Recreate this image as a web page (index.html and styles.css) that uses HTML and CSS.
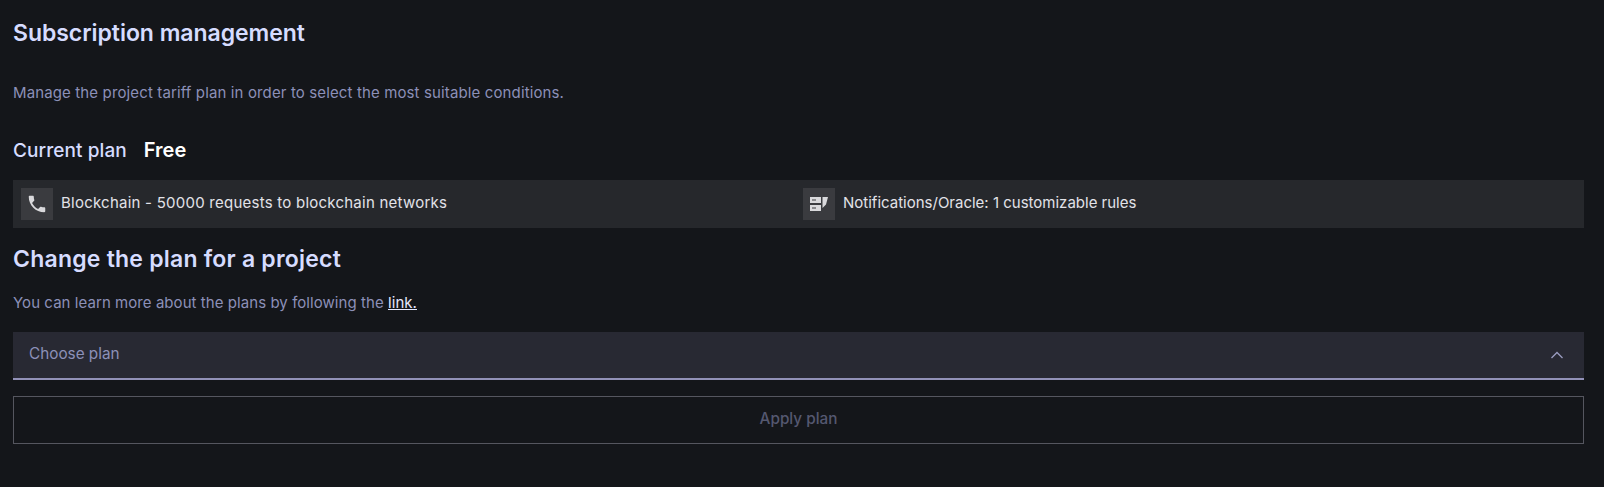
FILE: index.html
```html
<!DOCTYPE html>
<html lang="en">
<head>
<meta charset="utf-8">
<title>Subscription management</title>
<link rel="stylesheet" href="styles.css">
</head>
<body>
<main class="page">
  <h1 class="title title-first">Subscription management</h1>
  <p class="desc desc-top">Manage the project tariff plan in order to select the most suitable conditions.</p>
  <div class="current"><span class="current-label">Current plan</span><span class="current-value">Free</span></div>
  <div class="features">
    <div class="feature">
      <span class="feature-icon">
        <svg viewBox="0 0 24 24" width="22" height="22"><path fill="#d9d9dc" d="M6.620 10.790c1.440 2.830 3.760 5.140 6.590 6.590l2.200-2.200c.27-.27.67-.36 1.020-.24 1.120.37 2.330.57 3.570.57.55 0 1 .45 1 1V20c0 .55-.45 1-1 1-9.390 0-17-7.610-17-17 0-.55.45-1 1-1h3.500c.55 0 1 .45 1 1 0 1.250.2 2.450.57 3.570.11.35.03.74-.25 1.020l-2.200 2.200z"/></svg>
      </span>
      <span class="feature-text feature-text-wide">Blockchain - 50000 requests to blockchain networks</span>
    </div>
    <div class="feature">
      <span class="feature-icon">
        <svg viewBox="0 0 18 14" width="18" height="14"><path fill-rule="evenodd" fill="#d9d9dc" d="M0 0h11v6H0zM2 2.500v1h4v-1zM0 8h11v6H0zM2 10.500v1h4v-1zM12.500 0H18l-2 7.500-3.500 3.500z"/></svg>
      </span>
      <span class="feature-text">Notifications/Oracle: 1 customizable rules</span>
    </div>
  </div>
  <h2 class="title title-second">Change the plan for a project</h2>
  <p class="desc desc-link">You can learn more about the plans by following the <a class="link" href="#">link.</a></p>
  <div class="select">
    <span class="select-label">Choose plan</span>
    <svg class="chevron" viewBox="0 0 14 8" width="14" height="8"><path d="M1.500 7 7 1.500 12.500 7" fill="none" stroke="#9a9cc0" stroke-width="1.300"/></svg>
  </div>
  <button class="apply" type="button"><span class="apply-label">Apply plan</span></button>
</main>
</body>
</html>
```
FILE: styles.css
```css
* { box-sizing: border-box; }
html, body { margin: 0; height: 100%; }
body { background: #14161a; font-family: "Inter", "Liberation Sans", sans-serif; overflow: hidden; }
.page { padding: 18px 20px 0 13px; }
.title { margin: 0; color: #d6dcff; font-size: 23px; line-height: 30px; font-weight: 600; }
.title-first { letter-spacing: -0.04px; }
.title-second { margin-top: 16px; letter-spacing: 0.22px; }
.desc { margin: 0; color: #8c90b8; font-size: 15px; line-height: 20px; }
.desc-top { margin-top: 35px; letter-spacing: 0.13px; }
.current { margin-top: 35px; height: 24px; display: flex; align-items: center; gap: 17px; font-size: 19px; font-weight: 500; color: #d6dcff; }
.current-label { letter-spacing: 0.08px; }
.current-value { color: #fff; font-size: 20px; font-weight: 600; }
.features { margin-top: 18px; height: 48px; padding: 0 8px; background: #26282c; display: grid; grid-template-columns: 782px 1fr; align-items: center; }
.feature { display: flex; align-items: center; gap: 8px; }
.feature-icon { width: 32px; height: 32px; background: #3a3b3f; display: flex; align-items: center; justify-content: center; }
.feature-text { color: #e2e2e8; font-size: 15px; padding-bottom: 3px; }
.feature-text-wide { letter-spacing: 0.24px; }
.desc-link { margin-top: 19px; letter-spacing: 0.06px; }
.link { color: #e6e8ff; text-decoration: underline; }
.select { margin-top: 19px; height: 48px; padding: 0 20px 0 16px; background: #282933; border-bottom: 2px solid #9291b8; display: flex; align-items: center; justify-content: space-between; color: #8c90b8; font-size: 15.300px; }
.select-label { padding-bottom: 3px; }
.apply { display: block; width: 100%; margin-top: 16px; height: 48px; background: transparent; border: 1px solid #55565f; color: #555870; font: 500 15.300px "Inter", "Liberation Sans", sans-serif; }
.apply-label { display: block; padding-bottom: 3px; }
```
